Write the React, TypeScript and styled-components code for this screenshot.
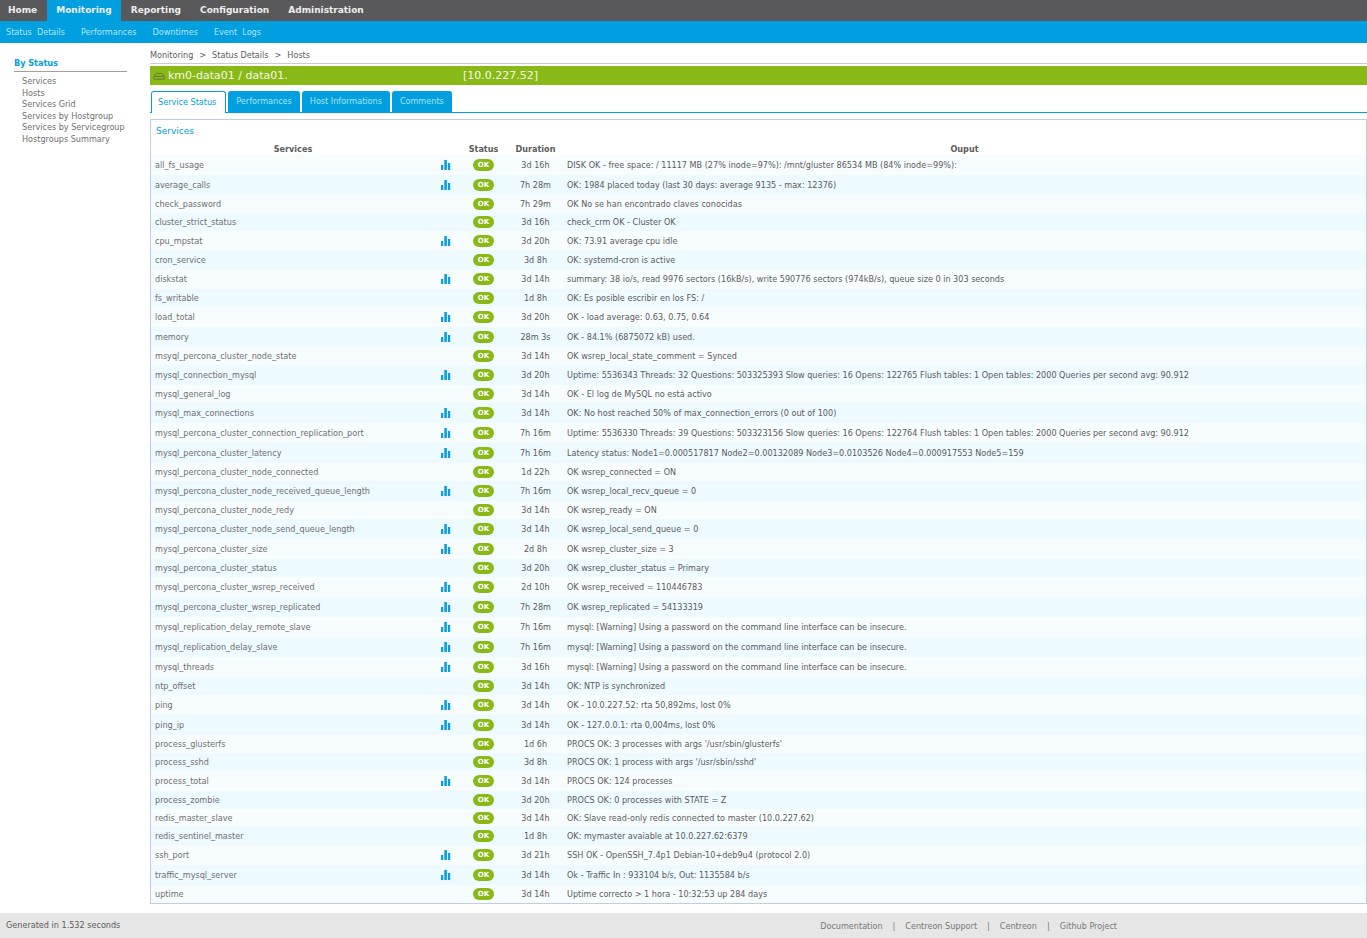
import React from "react";
import styled, { createGlobalStyle } from "styled-components";

const CONDENSED = '"DejaVu Sans Condensed", "DejaVu Sans", Verdana, sans-serif';
const NORMAL = '"DejaVu Sans", Verdana, sans-serif';
const BLUE = "#009fdf";
const GREEN = "#88b917";

const GlobalStyle = createGlobalStyle`
  * { box-sizing: border-box; }
  body {
    margin: 0;
    background: #fff;
    color: #5b5b5b;
    font-family: ${CONDENSED};
    font-size: 9px;
    line-height: 12px;
  }
  a { color: inherit; text-decoration: none; }
  ul { list-style: none; margin: 0; padding: 0; }
`;

const Page = styled.div`
  min-height: 100vh;
  display: flex;
  flex-direction: column;
`;

const MainNav = styled.nav`
  display: flex;
  gap: 1px;
  height: 21px;
  background: #59595b;
  font-family: ${NORMAL};
  font-weight: bold;
`;

const MainLink = styled.a<{ $active?: boolean }>`
  padding: 0 9px;
  line-height: 21px;
  color: #eee;
  background: ${(p) => (p.$active ? BLUE : "transparent")};
  &:first-child { padding-left: 8px; }
`;

const SubNav = styled.nav`
  display: flex;
  gap: 16px;
  height: 22px;
  padding-left: 6px;
  background: ${BLUE};
  color: #b5e6fa;
  line-height: 22px;
  white-space: pre;
`;

const Body = styled.div`
  display: flex;
  flex: 1;
`;

const Sidebar = styled.aside`
  flex: none;
  width: 150px;
  padding: 14px 23px 0 14px;
`;

const SideTitle = styled.h2`
  margin: 0 0 4px;
  padding-bottom: 2px;
  border-bottom: 1px solid #a0a0a0;
  color: ${BLUE};
  font-size: 9px;
  line-height: 12px;
`;

const SideList = styled.ul`
  padding-left: 8px;
  color: #6f6f6f;
  white-space: nowrap;
`;

const SideItem = styled.li`
  line-height: 12px;
  &:nth-child(odd) { line-height: 11px; }
`;

const Content = styled.main`
  flex: 1;
  min-width: 0;
  padding-bottom: 9px;
`;

const Breadcrumb = styled.nav`
  display: flex;
  gap: 6px;
  padding: 6px 0 2px;
  margin-bottom: 2px;
  border-bottom: 1px solid #ccc;
`;

const HostBar = styled.h1`
  display: flex;
  align-items: center;
  height: 19px;
  margin: 0 0 6px;
  padding-left: 3px;
  background: ${GREEN};
  color: #f4f9e8;
  font-family: ${NORMAL};
  font-size: 11px;
  font-weight: normal;
  svg { margin-right: 3px; }
`;

const HostName = styled.span`
  width: 295px;
`;

const Tabs = styled.div`
  display: flex;
  align-items: stretch;
  gap: 2px;
  height: 22px;
  padding-left: 1px;
  border-bottom: 1px solid ${BLUE};
`;

const Tab = styled.button<{ $active?: boolean }>`
  margin: 0 0 ${(p) => (p.$active ? "-1px" : "0")};
  padding: ${(p) => (p.$active ? "0 9px 1px 6px" : "0 7px 2px")};
  border: 1px solid ${BLUE};
  border-bottom: 0;
  border-radius: 3px 3px 0 0;
  background: ${(p) => (p.$active ? "#fff" : BLUE)};
  color: ${(p) => (p.$active ? BLUE : "#a9e3fb")};
  font-family: ${CONDENSED};
  font-size: 9px;
  line-height: 18px;
`;

const Panel = styled.section`
  margin-top: 6px;
  border: 1px solid #bfcfe3;
`;

const PanelTitle = styled.h3`
  margin: 0;
  padding: 5px;
  color: ${BLUE};
  font-family: ${NORMAL};
  font-size: 9px;
  font-weight: normal;
  line-height: 12px;
`;

const Table = styled.table`
  width: 100%;
  table-layout: fixed;
  border-collapse: collapse;
`;

const Col = styled.col<{ $w?: number }>`
  width: ${(p) => (p.$w ? `${p.$w}px` : "auto")};
`;

const Head = styled.th`
  height: 13px;
  padding: 0;
  text-align: center;
  line-height: 12px;
`;

const Row = styled.tr<{ $tall: boolean }>`
  height: ${(p) => (p.$tall ? 20 : 18)}px;
  background: #edfaff;
  &:nth-child(odd) { background: #f7fdff; }
`;

const Cell = styled.td<{ $center?: boolean; $soft?: boolean }>`
  padding: 0 4px;
  text-align: ${(p) => (p.$center ? "center" : "left")};
  color: ${(p) => (p.$soft ? "#6f6f6f" : "#5b5b5b")};
  vertical-align: middle;
  white-space: nowrap;
`;

const IconCell = styled.td`
  padding: 0 0 0 6px;
  vertical-align: middle;
  svg { display: block; }
`;

const Badge = styled.span`
  display: block;
  width: 21px;
  height: 12px;
  margin: 0 auto;
  border-radius: 6px;
  background: ${GREEN};
  color: #fff;
  font-family: ${NORMAL};
  font-size: 7px;
  font-weight: bold;
  line-height: 13px;
`;

const Footer = styled.footer`
  display: grid;
  grid-template-columns: 3fr 2fr;
  align-items: center;
  height: 25px;
  padding-bottom: 1px;
  background: #e6e6e6;
`;

const Generated = styled.span`
  padding-left: 6px;
`;

const FooterLinks = styled.nav`
  display: flex;
  gap: 10px;
  padding-top: 2px;
  color: #777;
`;

const services: [string, boolean, string, string][] = [
  ["all_fs_usage", true, "3d 16h", "DISK OK - free space: / 11117 MB (27% inode=97%): /mnt/gluster 86534 MB (84% inode=99%):"],
  ["average_calls", true, "7h 28m", "OK: 1984 placed today (last 30 days: average 9135 - max: 12376)"],
  ["check_password", false, "7h 29m", "OK No se han encontrado claves conocidas"],
  ["cluster_strict_status", false, "3d 16h", "check_crm OK - Cluster OK"],
  ["cpu_mpstat", true, "3d 20h", "OK: 73.91 average cpu idle"],
  ["cron_service", false, "3d 8h", "OK: systemd-cron is active"],
  ["diskstat", true, "3d 14h", "summary: 38 io/s, read 9976 sectors (16kB/s), write 590776 sectors (974kB/s), queue size 0 in 303 seconds"],
  ["fs_writable", false, "1d 8h", "OK: Es posible escribir en los FS: /"],
  ["load_total", true, "3d 20h", "OK - load average: 0.63, 0.75, 0.64"],
  ["memory", true, "28m 3s", "OK - 84.1% (6875072 kB) used."],
  ["msyql_percona_cluster_node_state", false, "3d 14h", "OK wsrep_local_state_comment = Synced"],
  ["mysql_connection_mysql", true, "3d 20h", "Uptime: 5536343 Threads: 32 Questions: 503325393 Slow queries: 16 Opens: 122765 Flush tables: 1 Open tables: 2000 Queries per second avg: 90.912"],
  ["mysql_general_log", false, "3d 14h", "OK - El log de MySQL no está activo"],
  ["mysql_max_connections", true, "3d 14h", "OK: No host reached 50% of max_connection_errors (0 out of 100)"],
  ["mysql_percona_cluster_connection_replication_port", true, "7h 16m", "Uptime: 5536330 Threads: 39 Questions: 503323156 Slow queries: 16 Opens: 122764 Flush tables: 1 Open tables: 2000 Queries per second avg: 90.912"],
  ["mysql_percona_cluster_latency", true, "7h 16m", "Latency status: Node1=0.000517817 Node2=0.00132089 Node3=0.0103526 Node4=0.000917553 Node5=159"],
  ["mysql_percona_cluster_node_connected", false, "1d 22h", "OK wsrep_connected = ON"],
  ["mysql_percona_cluster_node_received_queue_length", true, "7h 16m", "OK wsrep_local_recv_queue = 0"],
  ["mysql_percona_cluster_node_redy", false, "3d 14h", "OK wsrep_ready = ON"],
  ["mysql_percona_cluster_node_send_queue_length", true, "3d 14h", "OK wsrep_local_send_queue = 0"],
  ["mysql_percona_cluster_size", true, "2d 8h", "OK wsrep_cluster_size = 3"],
  ["mysql_percona_cluster_status", false, "3d 20h", "OK wsrep_cluster_status = Primary"],
  ["mysql_percona_cluster_wsrep_received", true, "2d 10h", "OK wsrep_received = 110446783"],
  ["mysql_percona_cluster_wsrep_replicated", true, "7h 28m", "OK wsrep_replicated = 54133319"],
  ["mysql_replication_delay_remote_slave", true, "7h 16m", "mysql: [Warning] Using a password on the command line interface can be insecure."],
  ["mysql_replication_delay_slave", true, "7h 16m", "mysql: [Warning] Using a password on the command line interface can be insecure."],
  ["mysql_threads", true, "3d 16h", "mysql: [Warning] Using a password on the command line interface can be insecure."],
  ["ntp_offset", false, "3d 14h", "OK: NTP is synchronized"],
  ["ping", true, "3d 14h", "OK - 10.0.227.52: rta 50,892ms, lost 0%"],
  ["ping_ip", true, "3d 14h", "OK - 127.0.0.1: rta 0,004ms, lost 0%"],
  ["process_glusterfs", false, "1d 6h", "PROCS OK: 3 processes with args '/usr/sbin/glusterfs'"],
  ["process_sshd", false, "3d 8h", "PROCS OK: 1 process with args '/usr/sbin/sshd'"],
  ["process_total", true, "3d 14h", "PROCS OK: 124 processes"],
  ["process_zombie", false, "3d 20h", "PROCS OK: 0 processes with STATE = Z"],
  ["redis_master_slave", false, "3d 14h", "OK: Slave read-only redis connected to master (10.0.227.62)"],
  ["redis_sentinel_master", false, "1d 8h", "OK: mymaster avaiable at 10.0.227.62:6379"],
  ["ssh_port", true, "3d 21h", "SSH OK - OpenSSH_7.4p1 Debian-10+deb9u4 (protocol 2.0)"],
  ["traffic_mysql_server", true, "3d 14h", "Ok - Traffic In : 933104 b/s, Out: 1135584 b/s"],
  ["uptime", false, "3d 14h", "Uptime correcto > 1 hora - 10:32:53 up 284 days"],
];

const mainLinks = ["Home", "Monitoring", "Reporting", "Configuration", "Administration"];
const subLinks = ["Status  Details", "Performances", "Downtimes", "Event  Logs"];
const sideLinks = ["Services", "Hosts", "Services Grid", "Services by Hostgroup", "Services by Servicegroup", "Hostgroups Summary"];
const tabs = ["Service Status", "Performances", "Host Informations", "Comments"];
const footerLinks = ["Documentation", "Centreon Support", "Centreon", "Github Project"];

const ChartIcon = () => (
  <svg width="10" height="10" viewBox="0 0 10 10" aria-hidden="true">
    <path fill="#0b9fe0" d="M0 5h2.3v5H0zM3.3 0h2.6v10H3.3zM6.9 3h2.3v7H6.9z" />
  </svg>
);

const DriveIcon = () => (
  <svg width="12" height="8" viewBox="0 0 12 8" aria-hidden="true" fill="none" stroke="#647a35">
    <path d="M.9 4.4 2.6 2q.4-.6 1-.6h4.8q.6 0 1 .6l1.7 2.4" />
    <rect x=".5" y="4.4" width="11" height="2.8" rx="1" />
  </svg>
);

export default function App() {
  return (
    <Page>
      <GlobalStyle />
      <MainNav>
        {mainLinks.map((t) => (
          <MainLink key={t} href="#" $active={t === "Monitoring"}>{t}</MainLink>
        ))}
      </MainNav>
      <SubNav>
        {subLinks.map((t) => <a key={t} href="#">{t}</a>)}
      </SubNav>
      <Body>
        <Sidebar>
          <SideTitle>By Status</SideTitle>
          <SideList>
            {sideLinks.map((t) => <SideItem key={t}><a href="#">{t}</a></SideItem>)}
          </SideList>
        </Sidebar>
        <Content>
          <Breadcrumb>
            <a href="#">Monitoring</a>
            <span>&gt;</span>
            <a href="#">Status Details</a>
            <span>&gt;</span>
            <a href="#">Hosts</a>
          </Breadcrumb>
          <HostBar>
            <DriveIcon />
            <HostName>km0-data01 / data01.</HostName>
            <span>[10.0.227.52]</span>
          </HostBar>
          <Tabs>
            {tabs.map((t, i) => <Tab key={t} type="button" $active={i === 0}>{t}</Tab>)}
          </Tabs>
          <Panel>
            <PanelTitle>Services</PanelTitle>
            <Table>
              <colgroup>
                <Col $w={284} />
                <Col $w={24} />
                <Col $w={49} />
                <Col $w={55} />
                <Col />
              </colgroup>
              <thead>
                <tr>
                  <Head scope="col">Services</Head>
                  <Head />
                  <Head scope="col">Status</Head>
                  <Head scope="col">Duration</Head>
                  <Head scope="col">Ouput</Head>
                </tr>
              </thead>
              <tbody>
                {services.map(([name, graph, duration, output]) => (
                  <Row key={name} $tall={graph}>
                    <Cell $soft><a href="#">{name}</a></Cell>
                    <IconCell>{graph && <ChartIcon />}</IconCell>
                    <Cell $center><Badge>OK</Badge></Cell>
                    <Cell $center>{duration}</Cell>
                    <Cell>{output}</Cell>
                  </Row>
                ))}
              </tbody>
            </Table>
          </Panel>
        </Content>
      </Body>
      <Footer>
        <Generated>Generated in 1.532 seconds</Generated>
        <FooterLinks>
          {footerLinks.map((t, i) => (
            <React.Fragment key={t}>
              {i > 0 && <span>|</span>}
              <a href="#">{t}</a>
            </React.Fragment>
          ))}
        </FooterLinks>
      </Footer>
    </Page>
  );
}
